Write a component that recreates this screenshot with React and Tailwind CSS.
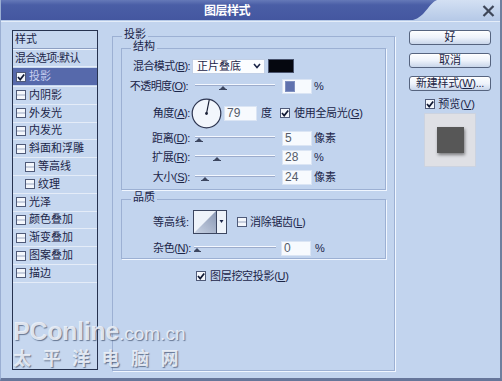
import React from "react";

function Box({ checked }) {
  return (
    <svg width="10" height="10" viewBox="0 0 10 10" className="shrink-0">
      <rect x="0.5" y="0.5" width="9" height="9" fill="#f4f7fc" stroke="#4f5a78" />
      {checked ? (
        <path d="M2 5 L4.2 7.6 L8.2 2.4" fill="none" stroke="#101833" strokeWidth="1.7" />
      ) : (
        <line x1="1" y1="5" x2="9" y2="5" stroke="#9aa6c0" />
      )}
    </svg>
  );
}

function Slider({ pos, w = 80 }) {
  return (
    <svg width={w} height="12" viewBox={`0 0 ${w} 12`} className="shrink-0">
      <line x1="0" y1="4.5" x2={w} y2="4.5" stroke="#f4f8ff" strokeWidth="1" />
      <line x1="0" y1="5.5" x2={w} y2="5.5" stroke="#9caccc" strokeWidth="1" />
      <path d={`M${pos - 3} 9 L${pos} 6 L${pos + 3} 9 Z`} fill="#3c4660" />
      <line x1={pos - 4} y1="9.5" x2={pos + 4} y2="9.5" stroke="#3c4660" />
    </svg>
  );
}

function Field({ value, w = "w-[30px]", sel }) {
  return (
    <div
      className={`${w} h-[15px] bg-[#f7fafe] border border-[#dbe5f4] flex items-center pl-[2px] text-[12px] leading-none text-[#555c6a] font-['Liberation_Sans',sans-serif]`}
    >
      {sel ? <div className="w-[10px] h-[11px] bg-[#6072ae] border border-[#8090c0]" /> : value}
    </div>
  );
}

function Btn({ children }) {
  return (
    <div className="w-[82px] h-[15px] rounded-[3px] border border-[#56647f] bg-gradient-to-b from-[#fdfeff] via-[#eef3fb] to-[#c9d6ea] flex items-center justify-center text-[11px] leading-none text-[#1b2444] shadow-[inset_0_1px_0_#ffffff]">
      {children}
    </div>
  );
}

const items = [
  { t: "内阴影" },
  { t: "外发光" },
  { t: "内发光" },
  { t: "斜面和浮雕" },
  { t: "等高线", i: true },
  { t: "纹理", i: true },
  { t: "光泽" },
  { t: "颜色叠加" },
  { t: "渐变叠加" },
  { t: "图案叠加" },
  { t: "描边" },
];

export default function App() {
  return (
    <div className="relative w-[502px] h-[381px] overflow-hidden bg-[#c2d4ee] border-l border-r-2 border-b-[3px] border-l-[#9aaed2] border-r-[#6f7f9e] border-b-[#66769a] text-[#1b2548] font-['Liberation_Sans','Noto_Sans_CJK_SC',sans-serif] text-[11px] leading-none">
      {/* title bar */}
      <div className="relative h-[22px] flex items-center">
        <svg className="absolute inset-0" width="502" height="22" viewBox="0 0 502 22">
          <defs>
            <linearGradient id="tb" x1="0" y1="0" x2="0" y2="1">
              <stop offset="0" stopColor="#6579b8" />
              <stop offset="0.25" stopColor="#4a5ea6" />
              <stop offset="1" stopColor="#4457a0" />
            </linearGradient>
            <linearGradient id="tl" x1="0" y1="0" x2="0" y2="1">
              <stop offset="0" stopColor="#d3e0f3" />
              <stop offset="1" stopColor="#b3c7e6" />
            </linearGradient>
          </defs>
          <rect x="0" y="0" width="502" height="22" fill="url(#tl)" />
          <path d="M0 0 H436 C428 3 424 17 412 20 H0 Z" fill="url(#tb)" />
          <line x1="0" y1="21.5" x2="502" y2="21.5" stroke="#e4edf9" />
        </svg>
        <span className="relative ml-[203px] text-[12px] font-bold text-white tracking-[-0.5px]">图层样式</span>
        <svg className="relative ml-auto mr-[5px]" width="13" height="12" viewBox="0 0 13 12">
          <path d="M1.5 1 L11.5 11 M11.5 1 L1.5 11" stroke="#3e4658" strokeWidth="2.2" />
        </svg>
      </div>

      {/* body */}
      <div className="flex items-start">
        {/* left list */}
        <div className="ml-[11px] mt-[8px] w-[86px] h-[340px] border border-[#26324f] bg-[#c6d7ef] flex flex-col">
          <div className="h-[17px] shrink-0 flex items-center pl-[2px] text-[11px]">样式</div>
          <div className="h-[2px] shrink-0 border-t border-[#8d9fc2] border-b border-b-[#eef4fd]" />
          <div className="h-[17px] shrink-0 flex items-center pl-[2px] border-b border-[#e4ecf8] text-[11px] tracking-[-0.6px]">
            混合选项:默认
          </div>
          <div className="h-[20px] shrink-0 flex items-center border-b border-[#e4ecf8] py-[1px]">
            <div className="w-full h-full bg-[#5669ab] flex items-center pl-[3px] gap-[3px]">
              <Box checked />
              <span className="text-[#c5cdf0]">投影</span>
            </div>
          </div>
          {items.map((it) => (
            <div
              key={it.t}
              className={`h-[17.8px] shrink-0 flex items-center gap-[3px] border-b border-[#e4ecf8] ${it.i ? "pl-[12px]" : "pl-[3px]"}`}
            >
              <Box />
              <span>{it.t}</span>
            </div>
          ))}
        </div>

        {/* main group */}
        <fieldset className="ml-[14px] mt-[7px] w-[282px] h-[342px] border border-[#9cb0d3] shadow-[1px_1px_0_#f0f6ff] px-[8px]">
          <legend className="ml-[1px] px-[2px] h-[14px] text-[11px]">投影</legend>

          {/* structure */}
          <fieldset className="mt-[-2px] w-[265px] border border-[#9cb0d3] shadow-[1px_1px_0_#f0f6ff] pb-[2px]">
            <legend className="ml-[9px] px-[2px] h-[14px] text-[11px]">结构</legend>

            <div className="mt-[2px] h-[18px] flex items-center">
              <div className="w-[68px] text-right tracking-[-0.6px]">混合模式(<u>B</u>):</div>
              <div className="ml-[2px] w-[73px] h-[15px] bg-[#fbfdff] border border-[#c2d0e6] flex items-center pl-[4px]">
                <span>正片叠底</span>
                <svg className="ml-auto mr-[3px]" width="8" height="6" viewBox="0 0 8 6">
                  <path d="M1 1 L4 4.5 L7 1" fill="none" stroke="#1b2548" strokeWidth="1.6" />
                </svg>
              </div>
              <div className="ml-[3px] w-[26px] h-[14px] bg-[#05070f] border border-[#48526c]" />
            </div>

            <div className="h-[22px] flex items-center">
              <div className="w-[66px] text-right tracking-[-0.6px]">不透明度(<u>O</u>):</div>
              <div className="ml-[7px]"><Slider pos={28} /></div>
              <div className="ml-[7px]"><Field sel /></div>
              <span className="ml-[2px]">%</span>
            </div>

            <div className="h-[32px] flex items-center">
              <div className="w-[68px] text-right tracking-[-0.4px]">角度(<u>A</u>):</div>
              <svg className="ml-[1px] shrink-0" width="31" height="31" viewBox="0 0 31 31">
                <circle cx="15.5" cy="15.5" r="14.3" fill="#f2f6fc" stroke="#2d3550" strokeWidth="1.2" />
                <line x1="15.5" y1="15.5" x2="18.2" y2="2" stroke="#1a2036" strokeWidth="1.2" />
                <circle cx="15.5" cy="15.5" r="1.4" fill="#1a2036" />
              </svg>
              <div className="ml-[2px]"><Field value="79" w="w-[33px]" /></div>
              <span className="ml-[4px]">度</span>
              <div className="ml-[8px] flex items-center gap-[4px]">
                <Box checked />
                <span className="tracking-[-0.3px]">使用全局光(<u>G</u>)</span>
              </div>
            </div>

            <div className="h-[18px] flex items-center">
              <div className="w-[68px] text-right tracking-[-0.4px]">距离(<u>D</u>):</div>
              <div className="ml-[5px]"><Slider pos={4} /></div>
              <div className="ml-[7px]"><Field value="5" /></div>
              <span className="ml-[2px]">像素</span>
            </div>

            <div className="h-[20px] flex items-center">
              <div className="w-[68px] text-right tracking-[-0.4px]">扩展(<u>R</u>):</div>
              <div className="ml-[5px]"><Slider pos={22} /></div>
              <div className="ml-[7px]"><Field value="28" /></div>
              <span className="ml-[2px]">%</span>
            </div>

            <div className="h-[20px] flex items-center">
              <div className="w-[68px] text-right tracking-[-0.4px]">大小(<u>S</u>):</div>
              <div className="ml-[5px]"><Slider pos={10} /></div>
              <div className="ml-[7px]"><Field value="24" /></div>
              <span className="ml-[2px]">像素</span>
            </div>
          </fieldset>

          {/* quality */}
          <fieldset className="mt-[2px] w-[265px] border border-[#9cb0d3] shadow-[1px_1px_0_#f0f6ff]">
            <legend className="ml-[9px] px-[2px] h-[14px] text-[11px]">品质</legend>
            <div className="h-[32px] flex items-center">
              <div className="w-[67px] text-right">等高线:</div>
              <svg className="ml-[4px] shrink-0" width="34" height="24" viewBox="0 0 34 24">
                <defs>
                  <linearGradient id="cg" x1="0" y1="1" x2="1" y2="0">
                    <stop offset="0" stopColor="#c9d3e4" />
                    <stop offset="1" stopColor="#8a98b4" />
                  </linearGradient>
                </defs>
                <rect x="0.5" y="0.5" width="33" height="23" fill="#eef3fa" stroke="#3c4660" />
                <path d="M1 23 L23 1 L23 23 Z" fill="url(#cg)" />
                <line x1="23.5" y1="1" x2="23.5" y2="23" stroke="#3c4660" />
                <path d="M26.5 10 L30.5 10 L28.5 13 Z" fill="#1b2548" />
              </svg>
              <div className="ml-[10px] flex items-center gap-[3px]">
                <Box />
                <span className="tracking-[-0.3px]">消除锯齿(<u>L</u>)</span>
              </div>
            </div>
            <div className="h-[20px] flex items-center">
              <div className="w-[69px] text-right tracking-[-0.4px]">杂色(<u>N</u>):</div>
              <div className="ml-[3px]"><Slider pos={3} w={82} /></div>
              <div className="ml-[5px]"><Field value="0" /></div>
              <span className="ml-[4px]">%</span>
            </div>
          </fieldset>

          <div className="mt-[9px] h-[16px] flex items-center gap-[4px] pl-[75px]">
            <Box checked />
            <span className="tracking-[-0.3px]">图层挖空投影(<u>U</u>)</span>
          </div>
        </fieldset>

        {/* right column */}
        <div className="ml-[14px] mt-[8px] w-[82px] flex flex-col items-center">
          <Btn>好</Btn>
          <div className="mt-[8px]"><Btn>取消</Btn></div>
          <div className="mt-[8px]"><Btn><span className="tracking-[-0.3px]">新建样式(<u>W</u>)...</span></Btn></div>
          <div className="mt-[6px] h-[14px] flex items-center gap-[3px]">
            <Box checked />
            <span>预览(<u>V</u>)</span>
          </div>
          <div className="mt-[2px] w-[52px] h-[54px] bg-[#dfe0e5] border border-[#ccd3e0] flex items-center justify-center">
            <div className="w-[27px] h-[26px] bg-[#575757] shadow-[1px_2px_3px_rgba(0,0,0,0.45)]" />
          </div>
        </div>
      </div>

      {/* watermark */}
      <div className="absolute left-[12px] top-[319px] pointer-events-none select-none text-[#eef2f9]/90 [text-shadow:1px_1px_1px_rgba(70,85,115,0.75)]">
        <div className="flex items-baseline font-['Liberation_Sans',sans-serif]">
          <span className="text-[25px] font-bold leading-none tracking-[-0.3px]">PConline</span>
          <span className="text-[19px] leading-none">.com.cn</span>
        </div>
        <div className="mt-[4px] text-[18px] font-bold leading-none tracking-[11.5px] font-['Noto_Sans_CJK_SC',sans-serif]">太平洋电脑网</div>
      </div>
    </div>
  );
}
